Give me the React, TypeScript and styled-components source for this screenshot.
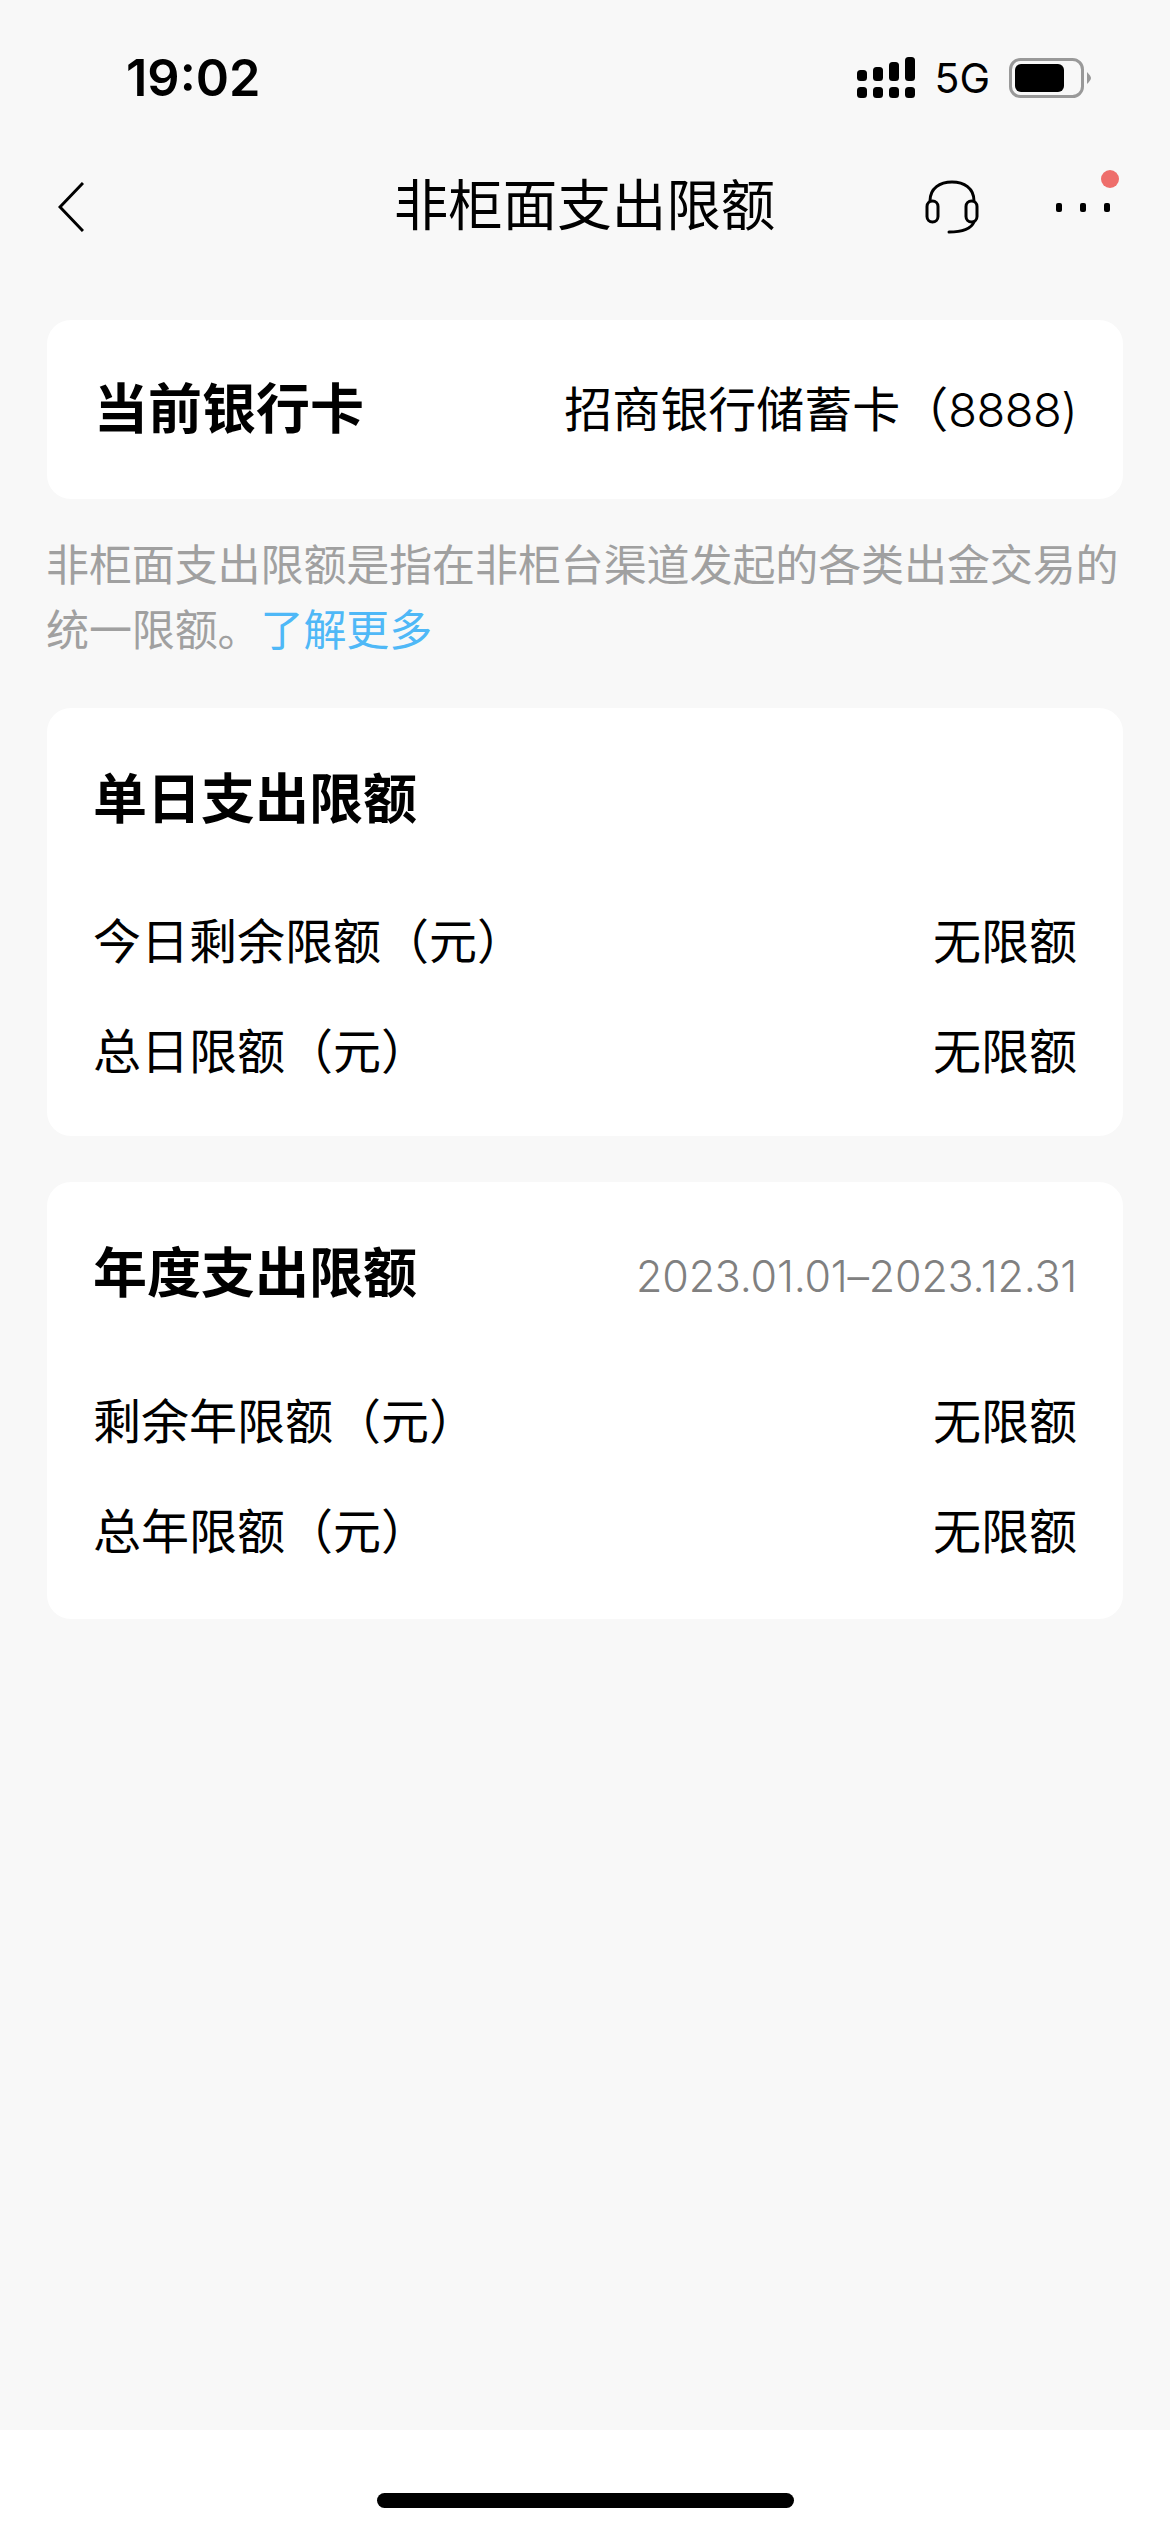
import styled, { createGlobalStyle } from 'styled-components';

const GlobalStyle = createGlobalStyle`
  html, body {
    margin: 0;
    padding: 0;
    background: #ffffff;
  }
  * {
    box-sizing: border-box;
  }
`;

const Page = styled.div`
  width: 1170px;
  height: 2532px;
  display: flex;
  flex-direction: column;
  background: #f8f8f8;
  font-family: "Noto Sans CJK SC", "Noto Sans", sans-serif;
  color: #000;
`;

const StatusBar = styled.div`
  height: 156px;
  flex: none;
  display: flex;
  align-items: center;
  justify-content: space-between;
  padding: 0 79px 0 126px;
`;

const Clock = styled.span`
  font-family: Inter, "Liberation Sans", sans-serif;
  font-size: 50.5px;
  font-weight: 600;
  line-height: 1;
`;

const StatusIcons = styled.div`
  display: flex;
  align-items: center;
  gap: 21px;
`;

const NetworkLabel = styled.span`
  margin: 0 -2px 0 -3px;
  font-family: Inter, "Liberation Sans", sans-serif;
  font-size: 41px;
  line-height: 1;
`;

const NavBar = styled.div`
  height: 102px;
  flex: none;
  display: flex;
  align-items: center;
  padding: 0 60px 0 58px;
`;

const NavTitle = styled.div`
  flex: 1;
  text-align: center;
  font-size: 54.5px;
  line-height: 1;
  padding-left: 160px;
  padding-bottom: 9px;
`;

const NavActions = styled.div`
  display: flex;
  align-items: center;
  gap: 77px;
`;

const MoreButton = styled.div`
  position: relative;
  display: flex;
  gap: 18px;
`;

const MoreDot = styled.span`
  width: 6px;
  height: 9px;
  border-radius: 2px;
  background: #000;
`;

const RedBadge = styled.span`
  position: absolute;
  right: -9px;
  top: -33px;
  width: 18px;
  height: 18px;
  border-radius: 50%;
  background: #ee6e6b;
`;

const Content = styled.div`
  flex: 1;
  padding: 62px 47px 0;
  display: flex;
  flex-direction: column;
`;

const Card = styled.section`
  background: #fff;
  border-radius: 24px;
`;

const CurrentCard = styled(Card)`
  height: 179px;
  padding: 0 46px 8px 47px;
  display: flex;
  align-items: center;
  justify-content: space-between;
`;

const Note = styled.p`
  margin: 31px 0 48px -1px;
  font-size: 43px;
  letter-spacing: -0.1px;
  line-height: 65px;
  color: #a0a0a0;
`;

const MoreLink = styled.span`
  color: #4fb8f7;
`;

const LimitCard = styled(Card)<{ $tall?: boolean }>`
  padding: 50px 46px ${props => (props.$tall ? '36px' : '33px')} 46px;
  margin-bottom: 46px;
`;

const CardHeader = styled.div<{ $roomy?: boolean }>`
  display: flex;
  align-items: center;
  justify-content: space-between;
  margin-bottom: ${props => (props.$roomy ? '55px' : '49px')};
`;

const CardTitle = styled.h2`
  margin: 0;
  font-size: 54px;
  font-weight: 700;
  line-height: 76px;
`;

const Period = styled.span`
  font-family: Inter, "Liberation Sans", sans-serif;
  font-size: 43px;
  font-weight: 300;
  letter-spacing: -0.2px;
  color: #808080;
  padding-top: 12px;
`;

const Row = styled.div`
  display: flex;
  align-items: center;
  justify-content: space-between;
  height: 110px;
  font-size: 48px;
`;

const BankName = styled.span`
  font-size: 48px;
`;

const CardNumber = styled.span`
  font-family: Inter, "Liberation Sans", sans-serif;
  font-size: 47px;
  font-weight: 300;
  letter-spacing: -0.5px;
`;

const HomeArea = styled.div`
  height: 102px;
  flex: none;
  background: #fff;
  display: flex;
  justify-content: center;
  padding-top: 63px;
`;

const HomeIndicator = styled.div`
  width: 417px;
  height: 15px;
  border-radius: 8px;
  background: #000;
`;

const SignalIcon = () => (
  <svg width="60" height="42" viewBox="0 0 60 42">
    <rect x="1" y="30" width="10" height="11" rx="3.5" />
    <rect x="17" y="30" width="10" height="11" rx="3.5" />
    <rect x="33" y="30" width="10" height="11" rx="3.5" />
    <rect x="49" y="30" width="10" height="11" rx="3.5" />
    <rect x="1" y="13" width="10" height="11" rx="3.5" />
    <rect x="17" y="10" width="10" height="14" rx="3.5" />
    <rect x="33" y="5" width="10" height="19" rx="3.5" />
    <rect x="49" y="0" width="10" height="24" rx="3.5" />
  </svg>
);

const BatteryIcon = () => (
  <svg width="82" height="40" viewBox="0 0 82 40">
    <rect x="1.5" y="1.5" width="72" height="37" rx="10" fill="none" stroke="#999" strokeWidth="3" />
    <rect x="6" y="6" width="49" height="28" rx="6" fill="#000" />
    <path d="M78 14 Q82 18 82 20 Q82 22 78 26 Z" fill="#999" />
  </svg>
);

const BackIcon = () => (
  <svg width="26" height="50" viewBox="0 0 26 50">
    <path d="M25 1 L2 25 L25 49" fill="none" stroke="#000" strokeWidth="3" />
  </svg>
);

const HeadsetIcon = () => (
  <svg width="54" height="54" viewBox="0 0 54 54" fill="none" stroke="#000" strokeWidth="3">
    <path d="M5 21 C5 8 15 2 27 2 C39 2 49 8 49 21" />
    <rect x="2" y="21" width="11" height="21" rx="5.5" />
    <rect x="41" y="21" width="11" height="21" rx="5.5" />
    <path d="M49 42 C46 49 38 52 24 52" strokeLinecap="round" />
  </svg>
);

export default function App() {
  return (
    <Page>
      <GlobalStyle />
      <StatusBar>
        <Clock>19:02</Clock>
        <StatusIcons>
          <SignalIcon />
          <NetworkLabel>5G</NetworkLabel>
          <BatteryIcon />
        </StatusIcons>
      </StatusBar>
      <NavBar>
        <BackIcon />
        <NavTitle>非柜面支出限额</NavTitle>
        <NavActions>
          <HeadsetIcon />
          <MoreButton>
            <MoreDot />
            <MoreDot />
            <MoreDot />
            <RedBadge />
          </MoreButton>
        </NavActions>
      </NavBar>
      <Content>
        <CurrentCard>
          <CardTitle>当前银行卡</CardTitle>
          <BankName>招商银行储蓄卡（<CardNumber>8888)</CardNumber></BankName>
        </CurrentCard>
        <Note>
          非柜面支出限额是指在非柜台渠道发起的各类出金交易的统一限额。<MoreLink>了解更多</MoreLink>
        </Note>
        <LimitCard>
          <CardHeader>
            <CardTitle>单日支出限额</CardTitle>
          </CardHeader>
          <Row>
            <span>今日剩余限额（元）</span>
            <span>无限额</span>
          </Row>
          <Row>
            <span>总日限额（元）</span>
            <span>无限额</span>
          </Row>
        </LimitCard>
        <LimitCard $tall>
          <CardHeader $roomy>
            <CardTitle>年度支出限额</CardTitle>
            <Period>2023.01.01–2023.12.31</Period>
          </CardHeader>
          <Row>
            <span>剩余年限额（元）</span>
            <span>无限额</span>
          </Row>
          <Row>
            <span>总年限额（元）</span>
            <span>无限额</span>
          </Row>
        </LimitCard>
      </Content>
      <HomeArea>
        <HomeIndicator />
      </HomeArea>
    </Page>
  );
}
